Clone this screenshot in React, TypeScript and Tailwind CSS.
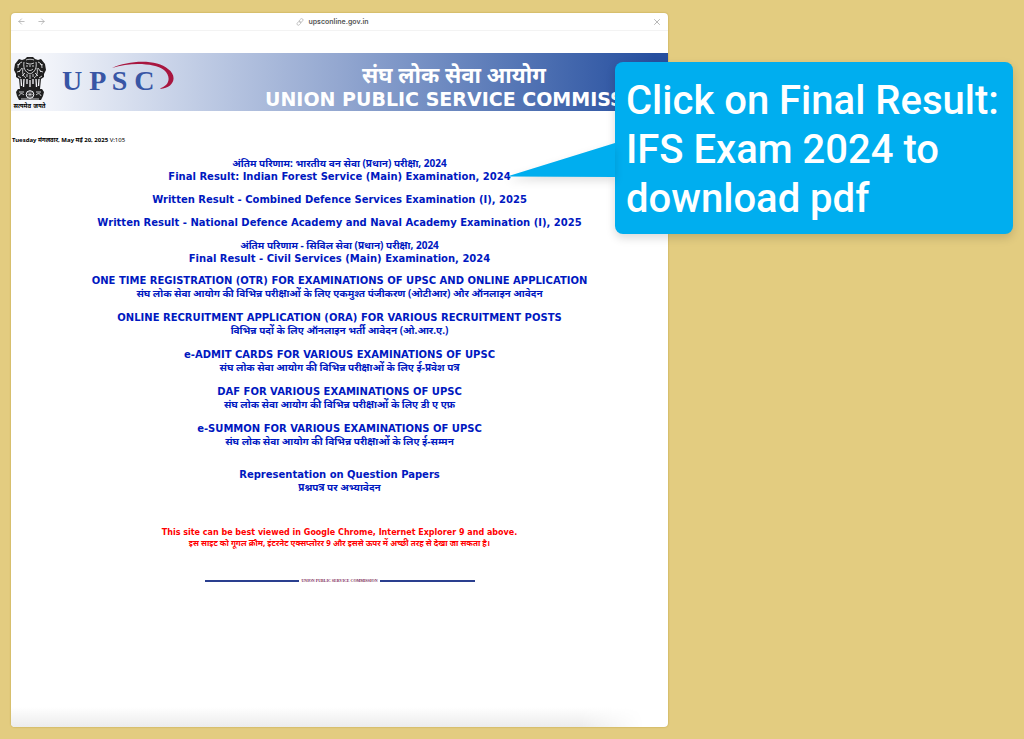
import { ArrowLeft, ArrowRight, X } from 'lucide-react'

interface Line {
  text: string
  hindi?: boolean
}

type Notice = Line[]

const RESULTS: Notice[] = [
  [
    { text: 'अंतिम परिणाम: भारतीय वन सेवा (प्रधान) परीक्षा, 2024', hindi: true },
    { text: 'Final Result: Indian Forest Service (Main) Examination, 2024' },
  ],
  [{ text: 'Written Result - Combined Defence Services Examination (I), 2025' }],
  [{ text: 'Written Result - National Defence Academy and Naval Academy Examination (I), 2025' }],
  [
    { text: 'अंतिम परिणाम - सिविल सेवा (प्रधान) परीक्षा, 2024', hindi: true },
    { text: 'Final Result - Civil Services (Main) Examination, 2024' },
  ],
]

const SERVICES: Notice[] = [
  [
    { text: 'ONE TIME REGISTRATION (OTR) FOR EXAMINATIONS OF UPSC AND ONLINE APPLICATION' },
    {
      text: 'संघ लोक सेवा आयोग की विभिन्न परीक्षाओं के लिए एकमुश्त पंजीकरण (ओटीआर) और ऑनलाइन आवेदन',
      hindi: true,
    },
  ],
  [
    { text: 'ONLINE RECRUITMENT APPLICATION (ORA) FOR VARIOUS RECRUITMENT POSTS' },
    { text: 'विभिन्न पदों के लिए ऑनलाइन भर्ती आवेदन (ओ.आर.ए.)', hindi: true },
  ],
  [
    { text: 'e-ADMIT CARDS FOR VARIOUS EXAMINATIONS OF UPSC' },
    { text: 'संघ लोक सेवा आयोग की विभिन्न परीक्षाओं के लिए ई-प्रवेश पत्र', hindi: true },
  ],
  [
    { text: 'DAF FOR VARIOUS EXAMINATIONS OF UPSC' },
    { text: 'संघ लोक सेवा आयोग की विभिन्न परीक्षाओं के लिए डी ए एफ़', hindi: true },
  ],
  [
    { text: 'e-SUMMON FOR VARIOUS EXAMINATIONS OF UPSC' },
    { text: 'संघ लोक सेवा आयोग की विभिन्न परीक्षाओं के लिए ई-सम्मन', hindi: true },
  ],
]

const REPRESENTATION: Notice[] = [
  [{ text: 'Representation on Question Papers' }, { text: 'प्रश्नपत्र पर अभ्यावेदन', hindi: true }],
]

export default function App() {
  return (
    <div className="relative flex min-h-screen bg-[#e3cc80] pt-[13px] pr-[356px] pb-3 pl-[11px] font-['DejaVu_Sans','Noto_Sans',sans-serif]">
      <main className="flex min-w-0 flex-1 flex-col overflow-hidden rounded-[4px] bg-white shadow-[0_0_2px_#b89d3c]">
        <BrowserBar />
        <Banner />
        <p className="mt-[23px] px-px font-['Noto_Sans','DejaVu_Sans',sans-serif] text-[6px] leading-3 text-black">
          <b>Tuesday मंगलवार, May मई 20, 2025</b> V:105
        </p>
        <div className="mt-[11px] text-center text-[10px] leading-[13px] font-bold text-[#0018c0]">
          <NoticeList notices={RESULTS} className="gap-[10px]" />
          <NoticeList notices={SERVICES} className="mt-[9px] gap-[11px]" />
          <NoticeList notices={REPRESENTATION} className="mt-5" />
        </div>
        <div className="mt-[34px] text-center text-[8px] leading-[10px] font-bold text-[#f00]">
          <p className="h-[10px]">This site can be best viewed in Google Chrome, Internet Explorer 9 and above.</p>
          <p className="h-[10px] font-['Noto_Sans','DejaVu_Sans',sans-serif]">
            इस साइट को गूगल क्रोम, इंटरनेट एक्सप्लोरर 9 और इससे ऊपर में अच्छी तरह से देखा जा सकता है।
          </p>
        </div>
        <footer className="mx-auto mt-7 flex w-[270px] items-center gap-[2px]">
          <span className="h-[2px] flex-1 bg-[#2a3f8f]" />
          <span className="font-['Liberation_Serif',serif] text-[4px] leading-[10px] font-bold text-[#7a1f55]">
            UNION PUBLIC SERVICE COMMISSION
          </span>
          <span className="h-[2px] flex-1 bg-[#2a3f8f]" />
        </footer>
        <div className="mt-auto mr-6 h-5 bg-linear-to-b from-white to-[#ececec] mask-r-from-90%" />
      </main>
      <Callout />
    </div>
  )
}

function BrowserBar() {
  return (
    <header className="flex h-[18px] shrink-0 items-center border-b border-[#f3f3f3] px-[6px] text-[#a8a8a8]">
      <div className="flex flex-1 gap-[11px]">
        <button type="button" aria-label="Back">
          <ArrowLeft size={9} strokeWidth={2} />
        </button>
        <button type="button" aria-label="Forward">
          <ArrowRight size={9} strokeWidth={2} />
        </button>
      </div>
      <div className="flex items-center gap-1 pr-[14px] font-['Inter',sans-serif] text-[7px] leading-3 font-semibold text-[#555]">
        <svg width="8" height="8" viewBox="0 0 9 9" fill="none" stroke="#b0b0b0" strokeWidth="0.8" aria-hidden="true">
          <rect x="3.200" y="1.400" width="5" height="3" rx="1.500" transform="rotate(-45 5.700 2.900)" />
          <rect x="0.800" y="4.400" width="5" height="3" rx="1.500" transform="rotate(-45 3.300 5.900)" />
        </svg>
        upsconline.gov.in
      </div>
      <div className="flex flex-1 justify-end">
        <button type="button" aria-label="Close">
          <X size={10} strokeWidth={2} />
        </button>
      </div>
    </header>
  )
}

function Banner() {
  return (
    <div className="mt-[22px] flex h-[58px] shrink-0 bg-linear-to-r from-[#f3f5fa] from-5% via-[#93a7d0] via-50% to-[#264f9f] to-98%">
      <div className="flex w-[37px] flex-col items-center pt-1">
        <Emblem />
        <span className="text-[6px] leading-[9px] font-bold whitespace-nowrap text-black">सत्यमेव जयते</span>
      </div>
      <div className="relative ml-[14px] w-[203px] pt-3 font-['Liberation_Serif',serif] text-[28px] leading-[32px] font-bold text-[#3856a5]">
        U P S C
        <svg className="absolute top-[7px] left-[49px]" width="66" height="34" viewBox="0 0 66 34" aria-hidden="true">
          <path d="M1 8C18 0 46-1 57 9c10 7 6 19-8 20l1-1c9-3 10-12 3-18C43 3 20 2 1 8Z" fill="#a8163f" />
        </svg>
      </div>
      <div className="min-w-0 flex-1 pt-2 text-white">
        <div className="ml-[97px] h-[26px] font-['Noto_Sans',sans-serif] text-[22px] leading-[26px] font-bold whitespace-nowrap">
          संघ लोक सेवा आयोग
        </div>
        <h1 className="text-[19px] leading-6 font-black whitespace-nowrap">UNION PUBLIC SERVICE COMMISSION</h1>
      </div>
    </div>
  )
}

function Emblem() {
  return (
    <svg width="34" height="44" viewBox="0 0 34 44" fill="#202020" aria-hidden="true">
      {/* Lion heads and manes */}
      <path d="M12 2 14 0h6l2 2 3 1 3-1 4 5 1 6-2 4 0 3-3 2-1 10H7L6 22l-3-2 0-3-2-4 1-6 4-5 3 1Z" />
      <g fill="none" stroke="#f4f5f8" strokeWidth="0.8">
        <path d="M13 3c2-1 6-1 8 0M13 6l3 1m2 0 3-1M17 6v4m-3 2c2 2 4 2 6 0M11 5c-1 6 1 10 6 12 5-2 7-6 6-12M13 9h2m4 0h2" />
        <path d="M9 5C6 6 5 8 5 11m2-4L4 8m5 3-3 4M4 15l3-1m3-3c-1 5 0 8 3 10M25 5c3 1 4 3 4 6m-2-4 3 1m-5 3 3 4m2 0-3-1m-3-3c1 5 0 8-3 10" />
        <path d="M12 16 9 19m13-3 3 3M14 17v3m3-2v4m3-5v3M5 19l3 2m21-2-3 2" />
        <path strokeWidth="1.300" d="M17 23v7M11 22l-.5 8M23 22l.5 8M14 22v5M20 22v5M8 22l.5 7M26 22l-.5 7" />
      </g>
      {/* Abacus with the wheel */}
      <path d="M5 32h24l2 3-1 4-2 4H6l-2-4-1-4Z" />
      <circle cx="17" cy="37.500" r="3.800" fill="none" stroke="#f4f5f8" />
      <path d="M17 34v7m-3.500-3.500h7M14.500 35l5 5m0-5-5 5" stroke="#f4f5f8" strokeWidth="0.5" />
      <path d="M6 35h5m12 0h5M6 39c1-3 3-3 5-1m12 0c2-2 4-2 5 1M8 42h18" stroke="#f4f5f8" strokeWidth="0.8" fill="none" />
    </svg>
  )
}

function NoticeList({ notices, className }: { notices: Notice[]; className: string }) {
  return (
    <ul className={`flex flex-col items-center ${className}`}>
      {notices.map((lines) => (
        <li key={lines[0].text}>
          <a href="#" className="block">
            {lines.map(({ text, hindi }) => (
              <span
                key={text}
                className={
                  hindi
                    ? "block h-[13px] font-['Noto_Sans','DejaVu_Sans',sans-serif] whitespace-nowrap"
                    : 'block h-[13px] whitespace-nowrap'
                }
              >
                {text}
              </span>
            ))}
          </a>
        </li>
      ))}
    </ul>
  )
}

function Callout() {
  return (
    <aside className="absolute top-[62px] right-[11px] w-[398px] rounded-[8px] bg-[#00aeef] px-[11px] pt-[14px] pb-[11px] font-['Roboto',sans-serif] text-[40px] leading-[49px] font-medium text-white shadow-[0_4px_10px_rgba(0,0,0,0.15)]">
      <svg
        className="absolute top-[80px] right-full drop-shadow-[0_4px_4px_rgba(0,0,0,0.12)]"
        width="108"
        height="36"
        viewBox="0 0 108 36"
        aria-hidden="true"
      >
        <path d="M108 1v34L0 34.500Z" fill="#00aeef" />
      </svg>
      <div className="whitespace-nowrap">Click on Final Result:</div>
      <div>IFS Exam 2024 to</div>
      <div>download pdf</div>
    </aside>
  )
}
